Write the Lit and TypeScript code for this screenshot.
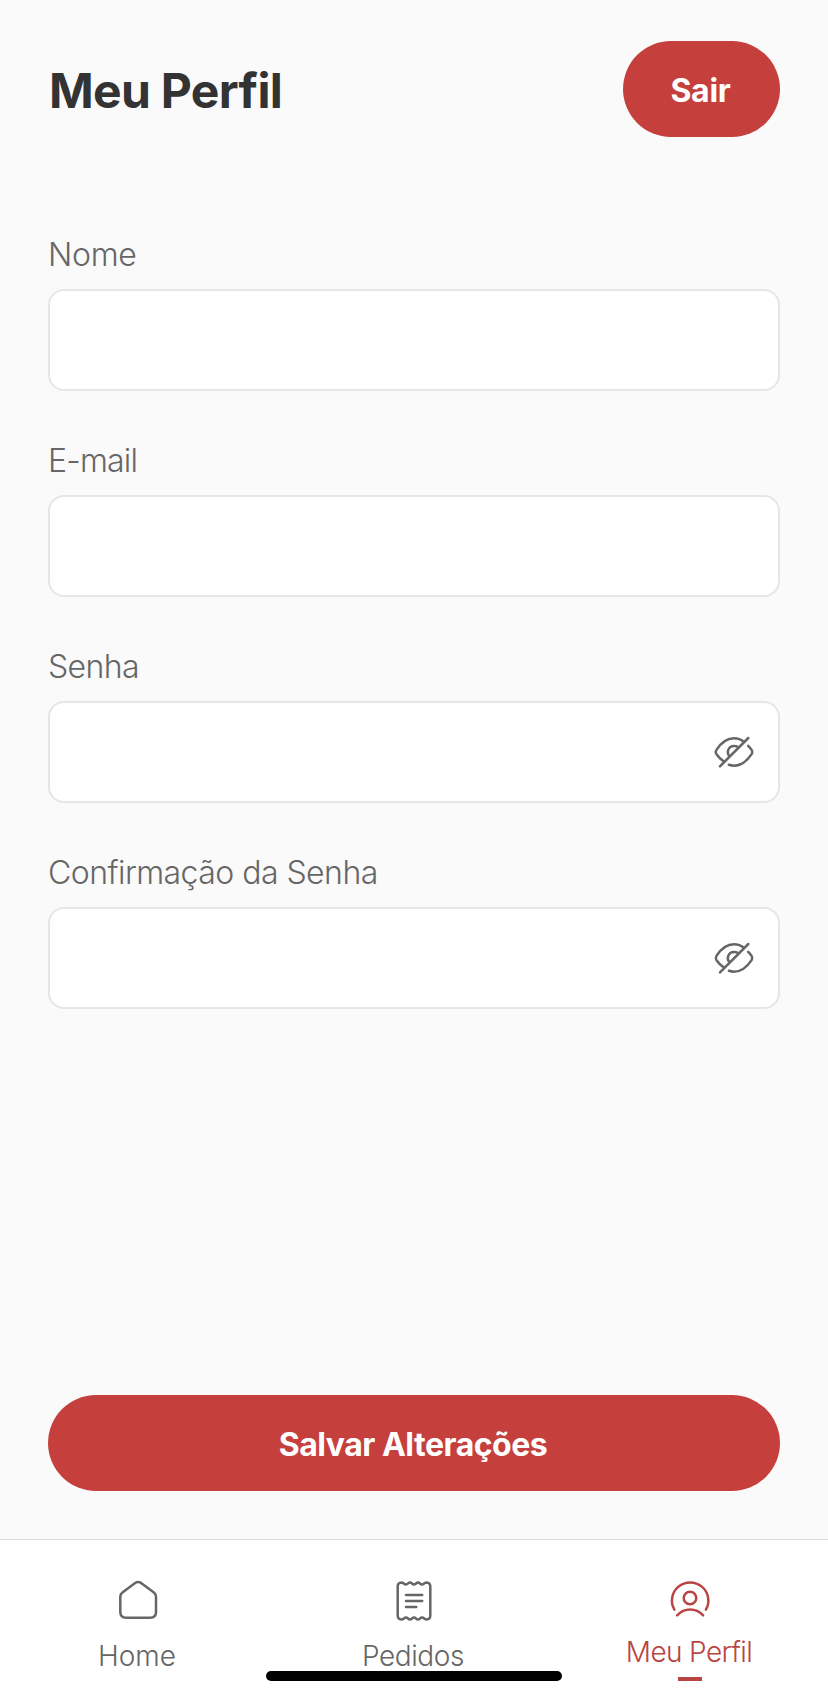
import { LitElement, html, css, svg } from "lit";
import { customElement, property, state } from "lit/decorators.js";
import { classMap } from "lit/directives/class-map.js";

const icons = {
  home: svg`<path d="M6.3 20.7Q6.3 18 8.4 16.4L20.8 7.2Q24.1 4.9 27.4 7.2L39.9 16.4Q42 18 42 20.7V36Q42 41.7 36.3 41.7H12Q6.3 41.7 6.3 36Z"/>`,
  receipt: svg`<path d="M7.7 10.5Q7.7 6.7 11.5 6.5C13.5 6.5 14 8.5 16 8.5S18.2 6.5 20 6.5S22.2 8.5 24 8.5S26.2 6.5 28 6.5S30.2 8.5 32 8.5S34.5 6.5 36.5 6.5Q40.3 6.7 40.3 10.5V39.5Q40.3 43.3 36.5 43.5C34.5 43.5 34 41.5 32 41.5S29.8 43.5 28 43.5S25.8 41.5 24 41.5S21.8 43.5 20 43.5S17.8 41.5 16 41.5S13.5 43.5 11.5 43.5Q7.7 43.3 7.7 39.5ZM16 19H32.2M16 25H32.2M16 31H26.3"/>`,
  user: svg`<path d="M8.4 33.7A18.2 18.2 0 1 1 39.9 33.7M11.2 39.3C18.5 31.7 29.8 31.7 37.1 39.3"/><circle cx="24" cy="22" r="6.3"/>`,
  eyeOff: svg`<path d="M13.3 33C10.5 31 8 28.4 6.5 26.2Q5.1 24 6.5 21.8C10 16.5 16 10.3 24 10.3C28 10.3 31.5 11.8 34.3 14M38.2 17.8C39.6 19.2 40.9 20.8 41.6 21.9Q42.9 24 41.6 26.1C38 31.5 32 37.7 24 37.7C22.2 37.7 20.6 37.4 18.9 36.8M19.3 28C16.5 24.8 17.8 18.3 24 18.1Q27 18 28.7 19.6M10 38.3L38.3 10"/>`,
};

@customElement("ui-icon")
class UiIcon extends LitElement {
  @property() name: keyof typeof icons = "home";

  static styles = css`
    :host { display: block; width: 48px; height: 48px; }
    .icon {
      display: block;
      fill: none;
      stroke: currentColor;
      stroke-width: 2.5;
      stroke-linecap: round;
      stroke-linejoin: round;
    }
  `;

  render() {
    return html`<svg class="icon" width="48" height="48" viewBox="0 0 48 48">${icons[this.name]}</svg>`;
  }
}

@customElement("form-field")
class FormField extends LitElement {
  @property() label = "";
  @property({ type: Boolean }) secret = false;
  @state() private revealed = false;

  static styles = css`
    :host { display: block; }
    .label {
      display: block;
      margin-bottom: 15px;
      font-size: 32px;
      line-height: 38px;
      font-weight: 300;
      color: #666;
      letter-spacing: var(--label-spacing, 0);
    }
    .box {
      display: flex;
      align-items: center;
      box-sizing: border-box;
      height: 102px;
      padding: 0 20px;
      border: 2px solid #e6e6e6;
      border-radius: 16px;
      background: #fff;
    }
    .input {
      flex: 1;
      min-width: 0;
      border: 0;
      outline: 0;
      background: none;
      font: 300 32px Inter, sans-serif;
      color: #333;
    }
    .toggle { border: 0; padding: 0; background: none; color: #666; }
  `;

  render() {
    return html`
      <label class="label" for="input">${this.label}</label>
      <div class="box">
        <input class="input" id="input" type=${this.secret && !this.revealed ? "password" : "text"} />
        ${this.secret
          ? html`<button class="toggle" @click=${() => (this.revealed = !this.revealed)}>
              <ui-icon name="eyeOff"></ui-icon>
            </button>`
          : null}
      </div>
    `;
  }
}

@customElement("app-root")
class AppRoot extends LitElement {
  static styles = css`
    :host {
      display: flex;
      flex-direction: column;
      position: relative;
      box-sizing: border-box;
      height: 100vh;
      overflow: hidden;
      background: #fafafa;
      font-family: Inter, "Liberation Sans", sans-serif;
    }
    .header {
      display: flex;
      justify-content: space-between;
      align-items: center;
      padding: 41px 48px 0;
    }
    .title {
      margin: 0;
      padding: 3px 0 0 1px;
      font-size: 48px;
      line-height: 58px;
      font-weight: 700;
      letter-spacing: -0.68px;
      color: #333;
    }
    .button {
      box-sizing: border-box;
      height: 96px;
      padding: 3px 2px 0 0;
      border: 0;
      border-radius: 48px;
      background: #c5403d;
      color: #fff;
      font: 700 32px/38px Inter, sans-serif;
      letter-spacing: -0.48px;
    }
    .logout { width: 157px; letter-spacing: -0.3px; }
    .form {
      display: flex;
      flex-direction: column;
      gap: 51px;
      padding: 99px 48px 0;
    }
    .name { --label-spacing: -0.3px; }
    .email { --label-spacing: -0.8px; }
    .password { --label-spacing: -0.6px; }
    .confirm { --label-spacing: -0.54px; }
    .save { margin: auto 48px 48px; }
    .nav {
      display: grid;
      grid-template-columns: repeat(3, 1fr);
      box-sizing: border-box;
      height: 158px;
      padding-top: 36px;
      border-top: 1px solid #d9d9d9;
      background: #fff;
    }
    .tab {
      display: flex;
      flex-direction: column;
      align-items: center;
      gap: 15px;
      color: #666;
      font-size: 28px;
      line-height: 34px;
      font-weight: 300;
    }
    .caption { padding-right: 2px; }
    .orders { letter-spacing: -0.4px; }
    .active { gap: 11px; color: #b94543; letter-spacing: -0.63px; }
    .marker { width: 24px; height: 4px; margin-top: -3px; background: #b94543; }
    .indicator {
      position: absolute;
      left: 266px;
      bottom: 16px;
      width: 296px;
      height: 10px;
      border-radius: 5px;
      background: #000;
    }
  `;

  private tabs = [
    { label: "Home", icon: "home" },
    { label: "Pedidos", icon: "receipt" },
    { label: "Meu Perfil", icon: "user" },
  ];

  render() {
    return html`
      <header class="header">
        <h1 class="title">Meu Perfil</h1>
        <button class="button logout">Sair</button>
      </header>
      <main class="form">
        <form-field class="name" label="Nome"></form-field>
        <form-field class="email" label="E-mail"></form-field>
        <form-field class="password" label="Senha" secret></form-field>
        <form-field class="confirm" label="Confirmação da Senha" secret></form-field>
      </main>
      <button class="button save">Salvar Alterações</button>
      <nav class="nav">
        ${this.tabs.map(
          (t) => html`<div class=${classMap({ tab: true, orders: t.icon === "receipt", active: t.icon === "user" })}>
            <ui-icon name=${t.icon}></ui-icon>
            <span class="caption">${t.label}</span>
            ${t.icon === "user" ? html`<i class="marker"></i>` : null}
          </div>`
        )}
      </nav>
      <div class="indicator"></div>
    `;
  }
}
